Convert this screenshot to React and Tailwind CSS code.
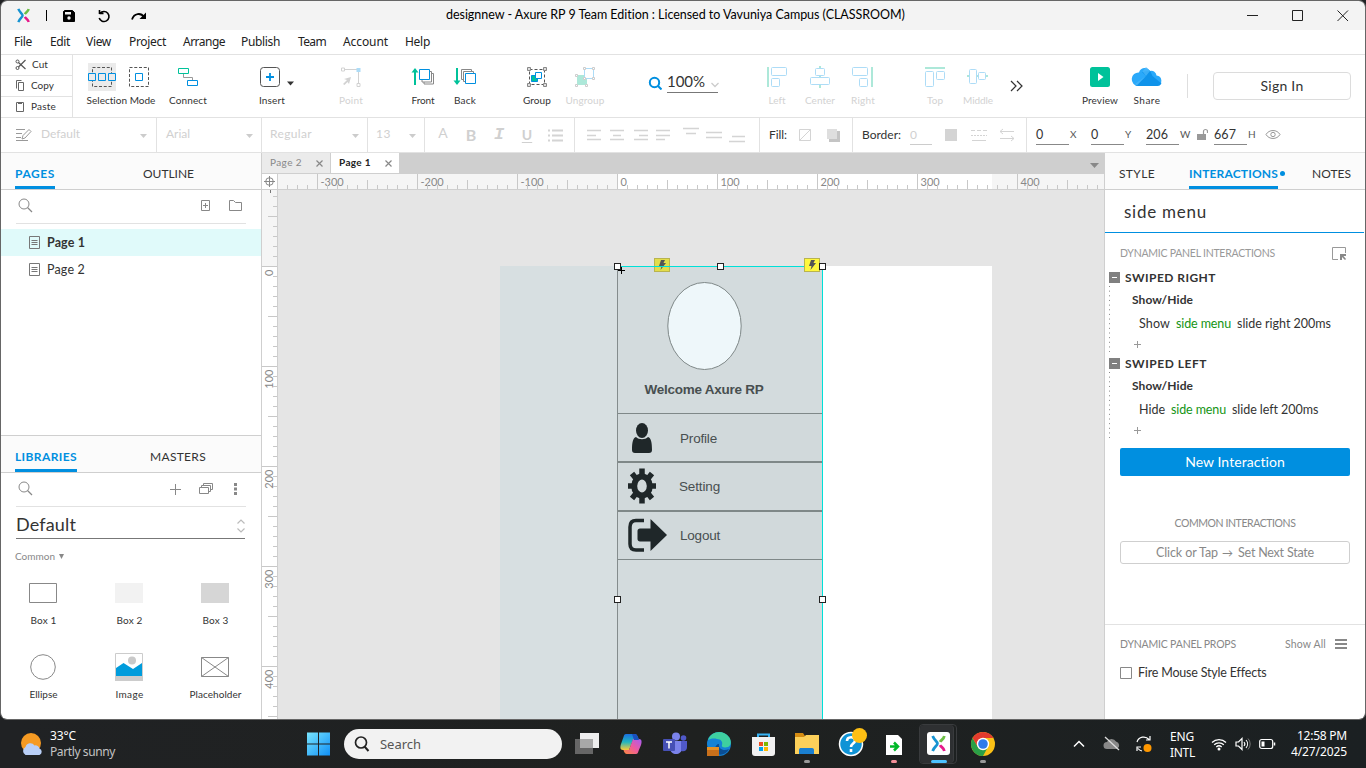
import { useLayoutEffect, useRef } from "react";

/* Single-line label; tracking is computed so that the text spans w pixels. */
function T({ w, className = "", children }) {
  const ref = useRef(null);
  useLayoutEffect(() => {
    const el = ref.current;
    el.style.letterSpacing = "0px";
    const natural = el.getBoundingClientRect().width;
    el.style.letterSpacing = (w - natural) / el.textContent.length + "px";
  }, [w, children]);
  return (
    <span ref={ref} className={"inline-block shrink-0 whitespace-pre " + className}>
      {children}
    </span>
  );
}

function Svg({ w, h, className = "", children }) {
  return (
    <svg width={w} height={h} viewBox={`0 0 ${w} ${h}`} fill="none" className={"shrink-0 " + className}>
      {children}
    </svg>
  );
}

function AxureMark({ size }) {
  return (
    <svg width={size} height={size} viewBox="0 0 14 16" fill="none" strokeWidth="2.6" className="shrink-0">
      <path d="M1.500 1C3 5 6 6 6 8S3 11 1.500 15" stroke="#1793d1" />
      <path d="M12.500 1C12 4 9.500 4.500 8.500 6.500" stroke="#6cbe45" />
      <path d="M8.500 9.500C9.500 11.500 12 12 12.500 15" stroke="#e6198a" />
    </svg>
  );
}

function TitleBar() {
  return (
    <div className="flex h-[29px] shrink-0 items-center bg-[#f3f3f3] pl-[15px]">
      <AxureMark size={15} />
      <div className="ml-[15px] h-[11px] w-px bg-black" />
      <Svg w={12} h={12} className="ml-4">
        <path d="M1.500 .5h8L11.500 2.500v9h-11V1.500z" fill="#000" stroke="#000" />
        <path d="M2 2h6v2.500H2z" fill="#f3f3f3" />
        <circle cx="6" cy="8" r="1.700" fill="#f3f3f3" />
      </Svg>
      <Svg w={14} h={14} className="ml-[22px]">
        <path d="M2.500 4.500h4M2.500 1v4M3 4.500a5 5 0 1 1 -.8 4.500" stroke="#000" strokeWidth="1.600" />
      </Svg>
      <Svg w={16} h={12} className="ml-[20px]">
        <path d="M1 9.500C3 3 10 2.500 13 7" stroke="#000" strokeWidth="1.800" />
        <path d="M15 2.500v6.500H8.500z" fill="#000" />
      </Svg>
      <T w={459} className="mb-px ml-[299px] text-[12.500px] leading-4 text-black">
        designnew - Axure RP 9 Team Edition : Licensed to Vavuniya Campus (CLASSROOM)
      </T>
      <Svg w={104} h={12} className="mb-px ml-[342px]">
        <path d="M0 6.500h11" stroke="#222" />
        <path d="M45.500 1.500h10v10h-10z" stroke="#222" />
        <path d="M90.500 1.500l10.500 10.500M101 1.500L90.500 12" stroke="#222" />
      </Svg>
    </div>
  );
}

function MenuBar() {
  return (
    <div className="flex h-[25px] shrink-0 items-center border-b border-[#e2e2e2] bg-white pl-[13px] font-['Noto_Sans','Open_Sans',sans-serif] text-[12px] leading-4 text-[#222]">
      <T w={18}>File</T>
      <T w={20} className="ml-[18px]">Edit</T>
      <T w={25} className="ml-4">View</T>
      <T w={37} className="ml-[18px]">Project</T>
      <T w={42} className="ml-[17px]">Arrange</T>
      <T w={39} className="ml-4">Publish</T>
      <T w={28} className="ml-[18px]">Team</T>
      <T w={45} className="ml-[17px]">Account</T>
      <T w={25} className="ml-[17px]">Help</T>
    </div>
  );
}

function Tool({ label, w, className, faded, children }) {
  return (
    <div className={"flex shrink-0 flex-col items-center pt-[6px] " + className}>
      <Svg w={32} h={32}>{children}</Svg>
      <T w={w} className={"text-[10px] leading-[14px] " + (faded ? "text-[#d2d2d2]" : "text-[#333]")}>
        {label}
      </T>
    </div>
  );
}

function Toolbar() {
  const b = "#008fe0";
  const lb = "#addcf7";
  const lg = "#ade8d9";
  return (
    <div className="flex h-[63px] shrink-0 border-b border-[#e2e2e2] bg-white text-[#333]">
      <div className="flex w-[72px] shrink-0 flex-col border-r border-[#e2e2e2] text-[10px]">
        <div className="flex h-[21px] items-center border-b border-[#e2e2e2] pl-[14px]">
          <Svg w={12} h={12}>
            <path d="M3.500 3.500l7 6.500M3.500 8l7-7" stroke="#555" strokeWidth="1.200" />
            <circle cx="2.500" cy="2.500" r="1.500" stroke="#555" />
            <circle cx="2.500" cy="9" r="1.500" stroke="#555" />
          </Svg>
          <T w={16} className="mb-[2px] ml-[5px]">Cut</T>
        </div>
        <div className="flex h-[21px] items-center border-b border-[#e2e2e2] pl-[14px]">
          <Svg w={12} h={12}>
            <path d="M3.500 2.500h5v8h-5zM1.500 8.500v-8h5" stroke="#666" />
          </Svg>
          <T w={23} className="mb-[2px] ml-1">Copy</T>
        </div>
        <div className="flex h-5 items-center pl-[14px]">
          <Svg w={12} h={12}>
            <path d="M1.500 1.500h7v9h-7z" stroke="#666" />
            <path d="M3 1h4v2H3z" fill="#666" />
          </Svg>
          <T w={25} className="mb-[2px] ml-1">Paste</T>
        </div>
      </div>
      <div className="ml-[11px] flex w-[74px] shrink-0 flex-col items-center pt-[6px]">
        <Svg w={74} h={32}>
          <path d="M4 2h28v28H4z" fill="#ebebeb" />
          <path d="M8.500 6.500h19v19h-19z" stroke="#555" strokeDasharray="3 1.750" />
          <path d="M4.500 12.500h7v7h-7zM14.500 12.500h7v7h-7zM24.500 12.500h7v7h-7z" fill="#ebebeb" stroke={b} />
          <path d="M45.500 6.500h19v19h-19z" stroke="#555" strokeDasharray="3 1.750" />
          <path d="M51.500 12.500h7v7h-7z" stroke={b} />
        </Svg>
        <T w={69} className="text-[10px] leading-[14px]">Selection Mode</T>
      </div>
      <Tool label="Connect" w={38} className="w-[60px]">
        <path d="M11.500 12.500v4h9v3" stroke="#999" />
        <path d="M6.500 7.500h10v5h-10z" stroke="#00c29a" />
        <path d="M15.500 19.500h10v5h-10z" stroke={b} />
      </Tool>
      <div className="ml-6 flex w-[60px] shrink-0 flex-col items-center pt-[6px]">
        <Svg w={60} h={32}>
          <rect x="18.500" y="6.500" width="19" height="19" rx="3" stroke="#555" />
          <path d="M24 16h8M28 12v8" stroke={b} strokeWidth="1.800" />
          <path d="M45 20.500h7l-3.500 4z" fill="#333" />
        </Svg>
        <T w={26} className="text-[10px] leading-[14px]">Insert</T>
      </div>
      <Tool label="Point" w={24} faded className="ml-6 w-[50px]">
        <path d="M9.500 8.500h13M23.500 11v11M6.500 7h3v3h-3zM22 22.500h3v3h-3z" stroke="#d2d2d2" fill="#fff" />
        <path d="M21.500 7h4v4h-4z" fill={lb} />
        <path d="M8 23l4-4-3-1 7-2-2 7-1.500-2-3 3z" fill="#d2d2d2" />
      </Tool>
      <Tool label="Front" w={23} className="ml-[26px] w-[42px]">
        <path d="M8 8v16" stroke="#00c29a" strokeWidth="2" />
        <path d="M4.500 11.500L8 7l3.500 4.500z" fill="#00c29a" />
        <path d="M23 10.500h1.500v10.500h-9.500V19M24.500 12.500h2v10.500h-9.500V21" stroke="#888" />
        <path d="M12.500 8.500h10v10h-10z" stroke={b} />
      </Tool>
      <Tool label="Back" w={22} className="w-[42px]">
        <path d="M8 7v16" stroke="#00c29a" strokeWidth="2" />
        <path d="M4.500 19.500L8 24l3.500-4.500z" fill="#00c29a" />
        <path d="M14 18.500h-1.500v-10h10V10M16 20.500h-1.500v-10h10V12" stroke="#888" />
        <path d="M16.500 12.500h10v10h-10z" stroke={b} />
      </Tool>
      <Tool label="Group" w={28} className="ml-[29px] w-[44px]">
        <path d="M8.500 8.500h15v15h-15z" stroke="#555" strokeDasharray="3 2" />
        <path d="M6.500 6.500h3v3h-3zM22.500 6.500h3v3h-3zM6.500 22.500h3v3h-3zM22.500 22.500h3v3h-3z" stroke="#888" fill="#ddd" />
        <path d="M10.500 14.500h6v6h-6z" fill="#00c29a" stroke={b} />
        <path d="M14.500 11.500h6v6h-6z" fill="#fff" stroke={b} />
      </Tool>
      <Tool label="Ungroup" w={39} faded className="ml-[2px] w-[48px]">
        <path d="M8 14h10v10H8z" fill={lg} />
        <path d="M15.500 7.500h9v10h-9z" fill="#fff" stroke={lb} />
        <path d="M6.500 13.500h2v2h-2zM14.500 6.500h2v2h-2zM23.500 6.500h2v2h-2zM23.500 16.500h2v2h-2zM6.500 23.500h2v2h-2zM16.500 23.500h2v2h-2zM14.500 16.500h2v2h-2z" stroke="#ccc" fill="#fff" />
      </Tool>
      <div className="ml-[39px] flex w-[72px] shrink-0 pt-[17px]">
        <Svg w={14} h={14} className="mt-1">
          <circle cx="6.500" cy="6.500" r="4.700" stroke={b} strokeWidth="2" />
          <path d="M10 10l3.500 3.500" stroke={b} strokeWidth="2" />
        </Svg>
        <div className="ml-[5px] flex h-[21px] w-[51px] border-b border-[#777] leading-[18px]">
          <T w={38} className="text-[15px] text-[#333]">100%</T>
          <Svg w={8} h={6} className="mt-[10px] ml-[6px]">
            <path d="M.5 1l3.500 3.500L7.500 1" stroke="#ccc" strokeWidth="1.300" />
          </Svg>
        </div>
      </div>
      <Tool label="Left" w={17} faded className="ml-9 w-[42px]">
        <path d="M7 6v20" stroke={lg} strokeWidth="2" />
        <rect x="10.500" y="6.500" width="15" height="8" rx="1" stroke={lb} />
        <rect x="10.500" y="17.500" width="8" height="8" rx="1" stroke={lb} />
      </Tool>
      <Tool label="Center" w={30} faded className="w-[44px]">
        <path d="M16 5v22" stroke={lg} strokeWidth="2" />
        <rect x="11.500" y="7.500" width="9" height="7" rx="1" stroke={lb} fill="#fff" />
        <rect x="6.500" y="16.500" width="19" height="7" rx="1" stroke={lb} fill="#fff" />
      </Tool>
      <Tool label="Right" w={24} faded className="w-[42px]">
        <path d="M25 6v20" stroke={lg} strokeWidth="2" />
        <rect x="5.500" y="6.500" width="15" height="8" rx="1" stroke={lb} />
        <rect x="12.500" y="17.500" width="8" height="8" rx="1" stroke={lb} />
      </Tool>
      <Tool label="Top" w={16} faded className="ml-[30px] w-[42px]">
        <path d="M6 7h20" stroke={lg} strokeWidth="2" />
        <rect x="6.500" y="10.500" width="8" height="15" rx="1" stroke={lb} />
        <rect x="17.500" y="10.500" width="8" height="8" rx="1" stroke={lb} />
      </Tool>
      <Tool label="Middle" w={30} faded className="w-[44px]">
        <path d="M5 15h21" stroke={lg} strokeWidth="2" />
        <rect x="7.500" y="8.500" width="7" height="14" rx="1" stroke={lb} fill="#fff" />
        <rect x="16.500" y="11.500" width="7" height="7" rx="1" stroke={lb} fill="#fff" />
      </Tool>
      <Svg w={20} h={32} className="mt-[15px] ml-[7px]">
        <path d="M4 11l5 5-5 5M10 11l5 5-5 5" stroke="#333" strokeWidth="1.200" />
      </Svg>
      <Tool label="Preview" w={36} className="ml-[49px] w-[48px]">
        <rect x="6" y="6" width="20" height="20" rx="2.500" fill="#00c29a" />
        <path d="M14 12v8l5.500-4z" fill="#fff" />
      </Tool>
      <Tool label="Share" w={27} className="w-[46px]">
        <path d="M7 25a6 6 0 0 1 1-13.500 6 6 0 0 1 11-1.500 5 5 0 0 1 6.500 4.500A5.300 5.300 0 0 1 26 25z" fill="#2aa9fa" />
        <path d="M4.500 24.500L15 15l-4-4 8-1.500 2.500 5.500 9 7.500A5 5 0 0 1 26 25H7z" fill="#0f93ea" />
        <path d="M4 23l11-8-3.500-4.500L15 6l4 4-4 5-9 9.500z" fill="#4fb9fb" opacity=".7" />
      </Tool>
      <div className="mt-[19px] ml-[17px] h-6 w-px bg-[#dedede]" />
      <div className="mt-[17px] ml-[25px] flex h-7 w-[138px] items-center justify-center rounded-[4px] border border-[#dcdcdc]">
        <T w={43} className="mb-[2px] text-[14px]">Sign In</T>
      </div>
    </div>
  );
}

function Caret() {
  return (
    <Svg w={7} h={4} className="mt-px">
      <path d="M0 0h7L3.500 4z" fill="#ccc" />
    </Svg>
  );
}

function Fmt({ className = "w-[23px]", children }) {
  return (
    <div className={"flex shrink-0 justify-center " + className}>
      <Svg w={18} h={18}>{children}</Svg>
    </div>
  );
}

function Dim({ value, w, unit, uw, className = "" }) {
  return (
    <div className={"flex shrink-0 items-center " + className}>
      <div className="mt-px flex h-[18px] w-[33px] border-b border-[#888] leading-4">
        <T w={w} className="text-[12.500px] text-[#333]">{value}</T>
      </div>
      <T w={uw} className="mb-px ml-px text-[10px] text-[#555]">{unit}</T>
    </div>
  );
}

function FormatBar() {
  const g = "#d4d4d4";
  return (
    <div className="flex h-[35px] shrink-0 border-b border-[#e2e2e2] bg-white text-[12px] text-[#d0d0d0]">
      <div className="flex w-[156px] shrink-0 items-center border-r border-[#e2e2e2] pl-[15px]">
        <Svg w={16} h={14}>
          <path d="M0 1.500h9M0 5.500h6M0 9.500h5M0 12.500h12" stroke="#999" />
          <path d="M6 11l1-3.500L13 1.500l2 2L9 10z" stroke="#999" />
        </Svg>
        <T w={39} className="mb-[2px] ml-[9px]">Default</T>
        <div className="ml-[60px]"><Caret /></div>
      </div>
      <div className="flex w-[105px] shrink-0 items-center justify-between border-r border-[#e2e2e2] pr-2 pl-[9px]">
        <T w={24} className="mb-[2px]">Arial</T><Caret />
      </div>
      <div className="flex w-[106px] shrink-0 items-center justify-between border-r border-[#e2e2e2] pr-2 pl-2">
        <T w={42} className="mb-[2px]">Regular</T><Caret />
      </div>
      <div className="flex w-[57px] shrink-0 items-center justify-between border-r border-[#e2e2e2] pr-2 pl-2">
        <T w={15} className="mb-[2px]">13</T><Caret />
      </div>
      <div className="flex w-[150px] shrink-0 items-center border-r border-[#e2e2e2] pl-1 text-center">
        <span className="w-7 pb-[5px] text-[14px]">A</span>
        <span className="w-7 text-[16px] font-bold">B</span>
        <span className="w-7 font-['Liberation_Mono',monospace] text-[17px] font-bold italic">I</span>
        <span className="w-7 pb-[2px] text-[14px] font-bold underline underline-offset-2">U</span>
        <Fmt className="w-7">
          <path d="M6 4.500h11M6 9.500h11M6 14.500h11M2 4.500h2M2 9.500h2M2 14.500h2" stroke={g} strokeWidth="2" />
        </Fmt>
      </div>
      <div className="flex w-[185px] shrink-0 items-center border-r border-[#e2e2e2] pl-[7px]">
        <Fmt><path d="M2 4.500h14M2 9.500h9M2 13.500h14" stroke={g} strokeWidth="1.500" /></Fmt>
        <Fmt><path d="M2 4.500h14M5 9.500h8M2 13.500h14" stroke={g} strokeWidth="1.500" /></Fmt>
        <Fmt><path d="M3 4.500h14M8 9.500h9M3 13.500h14" stroke={g} strokeWidth="1.500" /></Fmt>
        <Fmt><path d="M2 4.500h14M2 9.500h14M2 13.500h9" stroke={g} strokeWidth="1.500" /></Fmt>
        <Fmt className="ml-[5px] w-[23px]"><path d="M1 2.500h16M4 7.500h10" stroke={g} strokeWidth="1.500" /></Fmt>
        <Fmt><path d="M1 6.500h16M1 11.500h16" stroke={g} strokeWidth="1.500" /></Fmt>
        <Fmt><path d="M4 10.500h13M1 15.500h16" stroke={g} strokeWidth="1.500" /></Fmt>
      </div>
      <div className="flex w-[93px] shrink-0 items-center border-r border-[#e2e2e2] pl-[9px]">
        <T w={18} className="text-[#333]">Fill:</T>
        <Fmt className="ml-[7px] w-[22px]"><path d="M3.500 3.500h11v11h-11zM3.500 14.500l11-11" stroke={g} /></Fmt>
        <Fmt className="ml-[6px] w-[22px]">
          <path d="M5 5h11v11H5z" fill="#c4c4c4" />
          <path d="M3 3h10v10H3z" fill="#dedede" />
        </Fmt>
      </div>
      <div className="flex w-[174px] shrink-0 items-center border-r border-[#e2e2e2] pl-[9px]">
        <T w={39} className="text-[#333]">Border:</T>
        <div className="mt-px ml-[9px] flex h-[18px] w-[22px] border-b border-[#ccc] leading-4">0</div>
        <Fmt className="ml-[5px] w-7"><path d="M3 3h12v12H3z" fill={g} /></Fmt>
        <Fmt className="w-7">
          <path d="M1 4.500h16" stroke={g} strokeDasharray="4 2" />
          <path d="M1 9.500h16" stroke={g} strokeDasharray="2 1" />
          <path d="M2 14.500h14" stroke={g} />
        </Fmt>
        <Fmt className="w-7"><path d="M2 5.500h14M5 3L2 5.500 5 8M2 12.500h14M13 10l3 2.500-3 2.500" stroke={g} /></Fmt>
      </div>
      <Dim value="0" w={7} unit="X" uw={6} className="ml-[9px] w-[55px]" />
      <Dim value="0" w={7} unit="Y" uw={6} className="w-[55px]" />
      <Dim value="206" w={22} unit="W" uw={9} className="w-[50px]" />
      <Svg w={12} h={14} className="mt-[10px]">
        <path d="M1 6h9v6H1z" fill="#999" />
        <path d="M7.500 6V3.500a2 2 0 0 1 4 0V5" stroke="#999" strokeWidth="1.200" />
      </Svg>
      <Dim value="667" w={22} unit="H" uw={7} className="ml-[6px] w-[50px]" />
      <Svg w={16} h={12} className="mt-[11px] ml-px">
        <path d="M1 5.500C4 .2 12 .2 15 5.500 12 10.800 4 10.800 1 5.500z" stroke="#999" />
        <circle cx="8" cy="5.500" r="2.200" stroke="#999" />
      </Svg>
    </div>
  );
}

function PanelTab({ w, active, className = "", children }) {
  return (
    <div className={"flex h-full shrink-0 flex-col justify-between pt-[13px] " + className}>
      <T w={w} className={"text-[12px] leading-4 " + (active ? "font-bold text-[#008fe0]" : "text-[#333]")}>{children}</T>
      {active && <div className="h-[3px] bg-[#008fe0]" />}
    </div>
  );
}

function SearchIcon() {
  return (
    <Svg w={15} h={15}>
      <circle cx="6" cy="6" r="5" stroke="#888" />
      <path d="M9.500 9.500l4.500 4.500" stroke="#888" strokeWidth="1.300" />
    </Svg>
  );
}

function PageRow({ active, children }) {
  return (
    <div className={"flex h-[27px] items-center pl-7 text-[12.500px] text-[#333] " + (active ? "bg-[#e0fafa] font-bold" : "")}>
      <Svg w={11} h={13}>
        <path d="M.5.500h10v12H.5z" stroke="#777" />
        <path d="M2.500 4.500h6M2.500 6.500h6M2.500 8.500h6" stroke="#777" />
      </Svg>
      <T w={38} className="mt-px ml-[7px]">{children}</T>
    </div>
  );
}

function LibItem({ label, w, children }) {
  return (
    <div className="flex h-[74px] w-[86px] shrink-0 flex-col items-center">
      <Svg w={34} h={34}>{children}</Svg>
      <T w={w} className="mt-[3px] ml-px text-[10px] leading-[14px] text-[#333]">{label}</T>
    </div>
  );
}

function LeftPanel() {
  return (
    <div className="flex w-[261px] shrink-0 flex-col border-r border-[#cfcfcf] bg-white">
      <div className="flex h-[37px] shrink-0 border-b border-[#cfcfcf] bg-[#fbfbfb] pl-[14px]">
        <PanelTab w={40} active>PAGES</PanelTab>
        <PanelTab w={51} className="ml-[88px]">OUTLINE</PanelTab>
      </div>
      <div className="mr-[15px] ml-[15px] flex h-[34px] shrink-0 items-center border-b border-[#e2e2e2] pr-1 pb-[2px] pl-[2px]">
        <SearchIcon />
        <Svg w={10} h={12} className="ml-[168px]">
          <path d="M.5.500h8v10h-8zM4.500 3v5M2 5.500h5" stroke="#888" />
        </Svg>
        <Svg w={14} h={12} className="ml-[18px]">
          <path d="M.5 10.500V.5h4l2 2h6v8z" stroke="#888" />
        </Svg>
      </div>
      <div className="h-[211px] shrink-0 pt-[5px]">
        <PageRow active>Page 1</PageRow>
        <PageRow>Page 2</PageRow>
      </div>
      <div className="flex h-[38px] shrink-0 border-y border-[#cfcfcf] bg-[#fbfbfb] pl-[14px]">
        <PanelTab w={62} active>LIBRARIES</PanelTab>
        <PanelTab w={56} className="ml-[73px]">MASTERS</PanelTab>
      </div>
      <div className="mr-[15px] ml-[15px] flex h-[34px] shrink-0 items-center border-b border-[#e2e2e2] pb-[2px] pl-[2px]">
        <SearchIcon />
        <Svg w={12} h={12} className="ml-[136px]">
          <path d="M6.500 1v11M1 6.500h11" stroke="#888" />
        </Svg>
        <Svg w={14} h={12} className="ml-[18px]">
          <path d="M.5 4.500h9v6h-9zM2.500 4.500v-2h9v6h-2M4.500 2.500V.5h9v6h-2" stroke="#888" />
        </Svg>
        <Svg w={4} h={12} className="ml-5">
          <path d="M1 0h3v3H1zM1 4.500h3v3H1zM1 9h3v3H1z" fill="#888" />
        </Svg>
      </div>
      <div className="mr-4 ml-[15px] flex h-8 shrink-0 items-center justify-between border-b border-[#777]">
        <T w={60} className="mt-[3px] text-[18px] leading-6 text-[#333]">Default</T>
        <Svg w={8} h={14} className="mt-[7px]">
          <path d="M.5 4.500L4 1l3.500 3.500M.5 9.500L4 13l3.500-3.500" stroke="#bbb" strokeWidth="1.200" />
        </Svg>
      </div>
      <div className="flex h-[37px] shrink-0 items-start pt-[11px] pl-[14px] text-[10px] leading-[13px] text-[#888]">
        <T w={40}>Common</T>
        <Svg w={5} h={6} className="mt-[4px] ml-1"><path d="M0 0h5L2.500 5z" fill="#888" /></Svg>
      </div>
      <div className="-ml-px flex">
        <LibItem label="Box 1" w={26}><path d="M3.500 7.500h27v19h-27z" stroke="#888" /></LibItem>
        <LibItem label="Box 2" w={26}><path d="M3 7h28v20H3z" fill="#f2f2f2" /></LibItem>
        <LibItem label="Box 3" w={26}><path d="M3 7h28v20H3z" fill="#d6d6d6" /></LibItem>
      </div>
      <div className="-ml-px flex">
        <LibItem label="Ellipse" w={28}><circle cx="17" cy="17" r="12.300" stroke="#888" /></LibItem>
        <LibItem label="Image" w={28}>
          <path d="M3.500 3.500h27v27h-27z" stroke="#ccc" fill="#fff" />
          <circle cx="20" cy="10.500" r="4" fill="#c9c9c9" />
          <path d="M4 18l7.500-5 9.500 6 9-6v13H4z" fill="#009cdc" />
          <path d="M3 26h28v5H3z" fill="#ccc" />
        </LibItem>
        <LibItem label="Placeholder" w={52}><path d="M3.500 7.500h27v19h-27zM3.500 7.500l27 19M3.500 26.500l27-19" stroke="#888" /></LibItem>
      </div>
    </div>
  );
}

function ticks(from, to, origin) {
  const list = [];
  for (let v = from; v < to; v++) {
    const d = v - origin;
    if (d % 10 === 0) list.push([v, d % 100 === 0 ? 16 : d % 50 === 0 ? 9 : 4, d]);
  }
  return list;
}

function RulerTop() {
  return (
    <Svg w={827} h={15}>
      <path d="M0 0h827v15H0z" fill="#f5f5f5" />
      <path d="M339 0h375v15H339z" fill="#fff" />
      {ticks(0, 827, 339).map(([x, l, d]) => (
        <g key={x}>
          <path d={`M${x + 0.5} 15v-${l}`} stroke="#c8c8c8" />
          {l === 16 && <text x={x + 3.5} y="11.500" fontSize="11" fill="#888">{d}</text>}
        </g>
      ))}
    </Svg>
  );
}

function RulerLeft() {
  return (
    <Svg w={15} h={529}>
      <path d="M0 0h15v529H0z" fill="#fff" />
      <path d="M0 0h15v76H0z" fill="#f5f5f5" />
      <path d="M8.500 0v3" stroke="#777" />
      {ticks(0, 529, 76).map(([y, l, d]) => (
        <g key={y}>
          <path d={`M15 ${y + 0.5}h-${l}`} stroke="#c8c8c8" />
          {l === 16 && (
            <text transform={`translate(11 ${y + 3.5}) rotate(-90)`} textAnchor="end" fontSize="11" fill="#888">{d}</text>
          )}
        </g>
      ))}
    </Svg>
  );
}

function DocTab({ active, w, children }) {
  return (
    <div className={"flex h-5 shrink-0 items-center text-[10px] " + (active ? "w-[68px] bg-white pl-2 font-bold text-[#222]" : "w-[69px] border-r border-[#cfcfcf] bg-[#ebebeb] pl-2 text-[#888]")}>
      <T w={w} className="mb-[2px]">{children}</T>
      <Svg w={7} h={7} className="mt-px ml-[14px]">
        <path d="M.5.500l6 6M6.500.5l-6 6" stroke="#888" strokeWidth="1.200" />
      </Svg>
    </div>
  );
}

function Handle({ className }) {
  return <div className={"absolute size-[7px] border border-[#222] bg-white " + className} />;
}

function Bolt({ className }) {
  return (
    <div className={"absolute flex h-[14px] w-4 items-center justify-center border border-[#b9b44e] " + className}>
      <Svg w={8} h={10}>
        <path d="M3 0h4L5.500 3H8L2.500 10l1-4H1z" fill="#555" />
      </Svg>
    </div>
  );
}

/* Objects on the free canvas; origin is the canvas corner below the rulers. */
function Canvas() {
  return (
    <div className="relative min-w-0 flex-1 overflow-hidden bg-[#e5e5e5]">
      <div className="absolute top-[76px] left-[222px] h-[460px] w-[492px] bg-white" />
      <div className="absolute top-[76px] left-[222px] h-[460px] w-[118px] bg-[#d7dfe1]" />
      <div className="absolute top-[76px] left-[339px] h-[460px] w-[206px] border border-[#00e0d8] border-l-[#848c8d] bg-[#d3dbdd]">
        <div className="flex h-[147px] flex-col items-center border-b border-[#7f8888] pr-[33px]">
          <Svg w={76} h={90} className="mt-[14px]">
            <ellipse cx="38.500" cy="45" rx="36.700" ry="43.500" fill="#eef7fa" stroke="#7f8888" />
          </Svg>
          <T w={119} className="mt-[9px] ml-px font-['Liberation_Sans',Arial,sans-serif] text-[13.500px] leading-5 font-bold text-[#484f50]">Welcome Axure RP</T>
        </div>
        <div className="flex h-[49px] items-center border-b-2 border-[#7f8888] bg-[#d1d9db]">
          <Svg w={40} h={32} className="ml-1">
            <ellipse cx="20" cy="8.500" rx="6" ry="7.500" fill="#1f2729" />
            <path d="M14 15c3 3 9 3 12 0 3 1 4 5 4 13 0 2-1 3-3 3H13c-2 0-3-1-3-3 0-8 1-12 4-13z" fill="#1f2729" />
          </Svg>
          <T w={37} className="mt-[3px] ml-[18px] font-['Liberation_Sans',Arial,sans-serif] text-[13.500px] text-[#484f50]">Profile</T>
        </div>
        <div className="flex h-[49px] items-center border-b-2 border-[#7f8888] bg-[#d1d9db]">
          <Svg w={40} h={36} className="mb-px ml-1">
            <ellipse cx="20" cy="18" rx="7.800" ry="9.500" stroke="#1f2729" strokeWidth="6" />
            <g stroke="#1f2729" strokeWidth="5.500">
              <path d="M20 .5v7M20 28.500v7M6 18h6M28 18h6" />
              <path d="M10 5.500l4 5M30 5.500l-4 5M10 30.500l4-5M30 30.500l-4-5" />
            </g>
          </Svg>
          <T w={41} className="mt-[2px] ml-[17px] font-['Liberation_Sans',Arial,sans-serif] text-[13.500px] text-[#484f50]">Setting</T>
        </div>
        <div className="flex h-[48px] items-center border-b border-[#7f8888] bg-[#d1d9db]">
          <Svg w={40} h={34} className="mb-px ml-[10px]">
            <path d="M16 2.500H8C4 2.500 2 5 2 9v17c0 3.500 2 6 6 6h8" stroke="#1f2729" strokeWidth="3.500" />
            <path d="M12 10.500h10.500V1L39 17 22.500 33v-9.500H12c-1.500 0-2.500-1-2.500-2.500v-8c0-1.500 1-2.500 2.500-2.500z" fill="#1f2729" />
          </Svg>
          <T w={40} className="mt-[2px] ml-3 font-['Liberation_Sans',Arial,sans-serif] text-[13.500px] text-[#484f50]">Logout</T>
        </div>
      </div>
      <Bolt className="top-[68px] left-[376px] bg-[#e3dd4a]" />
      <div className="absolute top-[76px] left-[339px] h-px w-[206px] bg-[#00e0d8]" />
      <Bolt className="top-[68px] left-[526px] bg-[#fff83e]" />
      <Handle className="top-[73px] left-[336px]" />
      <Handle className="top-[73px] left-[439px]" />
      <Handle className="top-[73px] left-[541px]" />
      <Handle className="top-[406px] left-[336px]" />
      <Handle className="top-[406px] left-[541px]" />
      <Svg w={7} h={7} className="absolute top-[77px] left-[340px]">
        <path d="M3.500 0v7M0 3.500h7" stroke="#000" />
      </Svg>
    </div>
  );
}

function Center() {
  return (
    <div className="flex w-[842px] shrink-0 flex-col">
      <div className="flex h-[21px] shrink-0 border-b border-[#cfcfcf] bg-[#cfcfcf]">
        <DocTab w={32}>Page 2</DocTab>
        <DocTab w={32} active>Page 1</DocTab>
        <Svg w={10} h={5} className="mt-[10px] ml-auto mr-[5px]"><path d="M1 0h9L5.500 5z" fill="#888" /></Svg>
      </div>
      <div className="flex h-4 shrink-0 border-b border-[#cfcfcf]">
        <div className="flex w-4 shrink-0 border-r border-[#cfcfcf] bg-white">
          <Svg w={15} h={15}>
            <circle cx="7.500" cy="7.500" r="3.800" stroke="#888" />
            <path d="M7.500 2v11M2 7.500h11" stroke="#888" />
          </Svg>
        </div>
        <RulerTop />
      </div>
      <div className="flex min-h-0 flex-1">
        <div className="w-4 shrink-0 overflow-hidden border-r border-[#cfcfcf]"><RulerLeft /></div>
        <Canvas />
      </div>
    </div>
  );
}

function EventBlock({ name, nw, verb, vw, target, tw, rest, rw }) {
  return (
    <div className="flex h-[86px] shrink-0 pl-1 text-[12px] leading-4 text-[#333]">
      <div className="flex w-[11px] shrink-0 flex-col">
        <Svg w={11} h={11} className="mt-1">
          <path d="M0 0h11v11H0z" fill="#808080" />
          <path d="M3 5.500h5" stroke="#fff" />
        </Svg>
        <Svg w={2} h={70}><path d="M.5 3v66" stroke="#888" strokeDasharray="1 3.650" /></Svg>
      </div>
      <div className="flex flex-col">
        <T w={nw} className="mt-[2px] ml-[5px] self-start font-bold">{name}</T>
        <T w={61} className="mt-[6px] ml-3 self-start font-bold">Show/Hide</T>
        <div className="mt-2 ml-[19px] flex gap-[6px] text-[12.500px]">
          <T w={vw}>{verb}</T>
          <T w={tw} className="text-[#149414]">{target}</T>
          <T w={rw}>{rest}</T>
        </div>
        <Svg w={8} h={8} className="mt-2 ml-[13px]"><path d="M4.500 1v7M1 4.500h7" stroke="#999" /></Svg>
      </div>
    </div>
  );
}

function RightPanel() {
  return (
    <div className="flex w-[261px] shrink-0 flex-col border-l border-[#cfcfcf] bg-white text-[#333]">
      <div className="flex h-[37px] shrink-0 border-b border-[#cfcfcf] bg-[#fbfbfb] pl-[14px]">
        <PanelTab w={36}>STYLE</PanelTab>
        <PanelTab w={89} active className="ml-[34px]">INTERACTIONS</PanelTab>
        <Svg w={6} h={6} className="mt-[18px] ml-[2px]"><circle cx="2.500" cy="2.500" r="2.500" fill="#008fe0" /></Svg>
        <PanelTab w={39} className="ml-[26px]">NOTES</PanelTab>
      </div>
      <div className="mr-px flex h-[43px] shrink-0 items-center border-b border-[#008fe0] pl-[19px]">
        <T w={83} className="mt-px text-[17px]">side menu</T>
      </div>
      <div className="flex h-[35px] shrink-0 items-center justify-between pt-[6px] pr-[18px] pl-[15px]">
        <T w={155} className="text-[10.500px] text-[#999]">DYNAMIC PANEL INTERACTIONS</T>
        <Svg w={16} h={14}>
          <path d="M7 12.500H1.500V.5h13V6" stroke="#999" />
          <path d="M9 7h6v2h-2.500l2.500 3-1 1-3-3v3H9z" fill="#888" />
        </Svg>
      </div>
      <EventBlock name="SWIPED RIGHT" nw={91} verb="Show" vw={31} target="side menu" tw={55} rest="slide right 200ms" rw={94} />
      <EventBlock name="SWIPED LEFT" nw={82} verb="Hide" vw={26} target="side menu" tw={55} rest="slide left 200ms" rw={86} />
      <div className="mt-2 ml-[15px] flex h-7 w-[230px] shrink-0 items-center justify-center rounded-[2px] bg-[#008fe0] text-[14px] text-white">
        <T w={100} className="mb-px">New Interaction</T>
      </div>
      <div className="flex h-[65px] shrink-0 items-start justify-center pt-[41px] text-[10.500px] leading-3 text-[#888]">
        <T w={121}>COMMON INTERACTIONS</T>
      </div>
      <div className="ml-[15px] flex h-[23px] w-[230px] shrink-0 items-center justify-center rounded-[3px] border border-[#cfcfcf] text-[12.500px] leading-4 text-[#888]">
        <T w={62}>Click or Tap</T>
        <T w={11} className="mr-[5px] ml-1 text-[11px]">→</T>
        <T w={76}>Set Next State</T>
      </div>
      <div className="mt-[60px] flex h-[37px] shrink-0 items-center border-t border-[#e2e2e2] pl-[15px] text-[#888]">
        <T w={116} className="mt-[3px] text-[10.500px]">DYNAMIC PANEL PROPS</T>
        <T w={41} className="mt-[3px] ml-[49px] text-[10.500px]">Show All</T>
        <Svg w={12} h={12} className="mt-px ml-[9px]"><path d="M0 2h12M0 6h12M0 10h12" stroke="#888" strokeWidth="2" /></Svg>
      </div>
      <div className="flex h-6 shrink-0 items-center pl-[15px] text-[12.500px]">
        <Svg w={12} h={12}><path d="M.5.500h11v11H.5z" stroke="#888" fill="#fff" /></Svg>
        <T w={128} className="mt-px ml-[6px]">Fire Mouse Style Effects</T>
      </div>
    </div>
  );
}

function App44({ className = "", mark, children }) {
  return (
    <div className={"flex h-12 w-11 shrink-0 flex-col items-center pt-2 " + className}>
      <Svg w={32} h={32}>{children}</Svg>
      {mark}
    </div>
  );
}

function Taskbar() {
  return (
    <div className="flex h-12 shrink-0 items-start bg-linear-to-r from-[#202224] via-[#1f2120] to-[#1b2022] font-['Noto_Sans','Open_Sans',sans-serif] text-[12px] text-white">
      <Svg w={24} h={24} className="mt-3 ml-5">
        <circle cx="11" cy="11" r="10" fill="#f59a23" />
        <path d="M5.500 23a4.500 4.500 0 0 1 0-8 5 5 0 0 1 9-1.500 4 4 0 0 1 5 3 3.500 3.500 0 0 1 0 6.500z" fill="#b9cff7" />
      </Svg>
      <div className="mt-2 ml-[6px] flex w-[240px] shrink-0 flex-col items-start leading-4">
        <T w={26}>33°C</T>
        <T w={65} className="text-[#c4c4c4]">Partly sunny</T>
      </div>
      <div className="flex h-12 w-[56px] shrink-0 items-center justify-center">
        <Svg w={24} h={24}>
          <defs>
            <linearGradient id="win" x1="0" y1="0" x2="24" y2="24" gradientUnits="userSpaceOnUse">
              <stop offset="0" stopColor="#7ce8ff" /><stop offset="1" stopColor="#0f8ef5" />
            </linearGradient>
          </defs>
          <path d="M1 .5h11v11H1zM13 .5h11v11H13zM1 12.500h11v11H1zM13 12.500h11v11H13z" fill="url(#win)" />
        </Svg>
      </div>
      <div className="mt-[9px] -ml-[2px] flex h-[30px] w-[218px] shrink-0 items-center rounded-full bg-[#f2f2f2] pl-[10px]">
        <Svg w={16} h={16}>
          <circle cx="7" cy="6.500" r="5.500" stroke="#222" strokeWidth="1.700" />
          <path d="M10.500 10.500l4 4.500" stroke="#222" strokeWidth="2" />
        </Svg>
        <T w={41} className="mt-px ml-[10px] text-[13px] text-[#555]">Search</T>
      </div>
      <App44 className="ml-[3px]">
        <path d="M4 11h18v15H4z" fill="#666" />
        <path d="M9 5h19v15H9z" fill="#eee" />
        <path d="M9 11h13v9H9z" fill="#a8a8a8" />
      </App44>
      <App44>
        <defs>
          <linearGradient id="cpa" x1="0" y1="0" x2="0" y2="1">
            <stop offset="0" stopColor="#1b6fe0" /><stop offset=".5" stopColor="#20b5c0" /><stop offset="1" stopColor="#ffc935" />
          </linearGradient>
          <linearGradient id="cpb" x1="1" y1="0" x2="0" y2="1">
            <stop offset="0" stopColor="#a55df5" /><stop offset=".5" stopColor="#ee5aa0" /><stop offset="1" stopColor="#fb8a3c" />
          </linearGradient>
        </defs>
        <path d="M11 6h9c2 0 3 3 4 6h-6l-4 10H8c-3 0-3-3-2-6l2.500-7c.5-2 1-3 2.500-3z" fill="url(#cpa)" />
        <path d="M21 26h-9c-2 0-3-2-3.500-4H14l4-11h6c3 0 3 3 2 6l-2.500 6c-.5 2-1 3-2.500 3z" fill="url(#cpb)" />
        <path d="M17 6h3c2 0 3 3 4 6h-5z" fill="#1a50c0" />
      </App44>
      <App44>
        <circle cx="17" cy="8.500" r="4" fill="#7b83eb" />
        <circle cx="24.500" cy="10" r="2.800" fill="#5059c9" />
        <path d="M11 13h12v7c0 8-12 8-12 0z" fill="#7b83eb" />
        <path d="M22 13h6v6c0 4-3 5-6 4z" fill="#5059c9" />
        <rect x="4" y="11" width="12" height="12" rx="1" fill="#4650b5" />
        <path d="M7 14h6M10 14v6.500" stroke="#fff" strokeWidth="1.500" />
      </App44>
      <App44>
        <circle cx="16" cy="16" r="12" fill="#1583d6" />
        <path d="M5 12C8 3 20 1 26 9c3 4 2 9-1 10-4 1-7 0-6-2 1-3-1-6-5-6-4-1-7 0-9 1z" fill="#3ed0a0" />
        <path d="M16 16c-1 4 4 8 10 5-3 7-14 8-14 0 0-3 2-5 4-5z" fill="#0b4e94" />
        <path d="M4 19h12v9H4z" fill="#c9701b" />
        <path d="M4 19h12v3H4z" fill="#e59126" />
      </App44>
      <App44>
        <path d="M11 10V6.500h11V10" stroke="#36b3f5" strokeWidth="2" />
        <path d="M5 9h23v16c0 2-1 3-3 3H8c-2 0-3-1-3-3z" fill="#f1f1f1" />
        <path d="M12 14h4v4h-4z" fill="#f04e1f" /><path d="M17 14h4v4h-4z" fill="#7eb900" />
        <path d="M12 19h4v4h-4z" fill="#00a2ed" /><path d="M17 19h4v4h-4z" fill="#fdb900" />
      </App44>
      <App44 mark={<div className="h-[3px] w-[6px] rounded-full bg-[#999]" />}>
        <path d="M4 5h8l2 3v5H4z" fill="#d58c12" />
        <path d="M4 9h9l2-2h13v19H4z" fill="#fcd05a" />
        <path d="M8 26v-4c0-1.500 1-2 2-2h11c1.500 0 2 1 2 2v4z" fill="#1a7fd0" />
      </App44>
      <App44>
        <circle cx="16" cy="16" r="11.500" fill="#0f93d6" stroke="#fff" strokeWidth="1.500" />
        <path d="M12 13c0-5 8-5 8-.5 0 3-4 3-4 6.500M16 21v3" stroke="#fff" strokeWidth="2.600" />
        <circle cx="24.500" cy="7.500" r="7.500" fill="#fdbf14" />
      </App44>
      <App44 className="-ml-px" mark={<div className="h-[3px] w-[6px] rounded-full bg-[#f5909a]" />}>
        <path d="M8 7h12l4 4v16H8z" fill="#fff" />
        <path d="M12 18.500h7M16 14.500l4 4-4 4" stroke="#00b828" strokeWidth="2.500" />
      </App44>
      <div className="mt-1 ml-[3px] flex h-10 w-[38px] shrink-0 rounded-[4px] border border-[#393b3d]">
        <div className="flex h-[38px] w-[34px] flex-col items-center rounded-[4px] border-r border-[#393b3d] bg-[#2e3032] pt-[7px]">
          <div className="ml-1 flex size-[23px] items-center justify-center rounded-[3px] bg-white">
            <AxureMark size={17} />
          </div>
          <div className="mt-[5px] ml-1 h-[3px] w-4 rounded-full bg-[#4cc2ff]" />
        </div>
      </div>
      <App44 className="ml-1" mark={<div className="h-[3px] w-[6px] rounded-full bg-[#999]" />}>
        <circle cx="16" cy="16" r="12" fill="#fbc116" />
        <path d="M5.600 10A12 12 0 0 1 26.400 10H16z" fill="#e33b2e" />
        <path d="M5.600 10A12 12 0 0 0 16 28l5-9-10 0z" fill="#2a9f47" />
        <path d="M5.600 10l5.400 9 5-9z" fill="#e33b2e" />
        <circle cx="16" cy="16" r="6.200" fill="#fff" />
        <circle cx="16" cy="16" r="4.800" fill="#2f7bea" />
      </App44>
      <Svg w={12} h={8} className="mt-5 ml-[68px]"><path d="M1 6.500l5-5 5 5" stroke="#fff" strokeWidth="1.500" /></Svg>
      <Svg w={18} h={16} className="mt-4 ml-[18px]">
        <path d="M4 13a3.500 3.500 0 0 1 0-7 5 5 0 0 1 9-.5 4 4 0 0 1 1 7.500z" fill="#888" />
        <path d="M2 1l14 13" stroke="#ddd" strokeWidth="1.300" />
      </Svg>
      <Svg w={18} h={18} className="mt-[15px] ml-[14px]">
        <path d="M2 7a7 7 0 0 1 12-2.500M15 1v4h-4M2 16v-4h4M3 13.500a7 7 0 0 0 4 2.500" stroke="#fff" strokeWidth="1.200" />
        <circle cx="12.500" cy="13" r="4" fill="#ff9800" />
      </Svg>
      <div className="mt-[9px] ml-[17px] flex w-6 shrink-0 flex-col items-start leading-4">
        <T w={24}>ENG</T>
        <T w={25}>INTL</T>
      </div>
      <Svg w={16} h={14} className="mt-[17px] ml-[17px]">
        <path d="M1 5.500a10 10 0 0 1 14 0M3.200 7.800a7 7 0 0 1 9.600 0M5.300 10a4 4 0 0 1 5.400 0" stroke="#fff" strokeWidth="1.300" />
        <circle cx="8" cy="12" r="1.500" fill="#fff" />
      </Svg>
      <Svg w={16} h={14} className="mt-[17px] ml-2">
        <path d="M1 5h2.500L7 1.500v11L3.500 9H1z" stroke="#fff" strokeWidth="1.200" />
        <path d="M9 5a3 3 0 0 1 0 4M11 3a6 6 0 0 1 0 8" stroke="#fff" strokeWidth="1.100" />
        <path d="M13 1.500a8 8 0 0 1 0 11" stroke="#777" />
      </Svg>
      <Svg w={17} h={12} className="mt-[18px] ml-2">
        <rect x=".7" y="1.500" width="13" height="9" rx="2" stroke="#fff" strokeWidth="1.200" />
        <path d="M2.500 3.500h3v5h-3z" fill="#fff" />
        <path d="M15.500 4.500v3" stroke="#fff" strokeWidth="1.500" />
      </Svg>
      <div className="mt-2 mr-[19px] ml-auto flex shrink-0 flex-col items-end leading-4">
        <T w={50}>12:58 PM</T>
        <T w={56}>4/27/2025</T>
      </div>
    </div>
  );
}

export default function App() {
  return (
    <div className="flex h-[768px] w-[1366px] flex-col overflow-hidden bg-[#202224] font-[Lato,'Open_Sans',sans-serif]">
      <div className="flex h-[720px] shrink-0 flex-col overflow-hidden rounded-[7px] border border-[#666]">
        <TitleBar />
        <MenuBar />
        <Toolbar />
        <FormatBar />
        <div className="flex min-h-0 flex-1">
          <LeftPanel />
          <Center />
          <RightPanel />
        </div>
      </div>
      <Taskbar />
    </div>
  );
}
